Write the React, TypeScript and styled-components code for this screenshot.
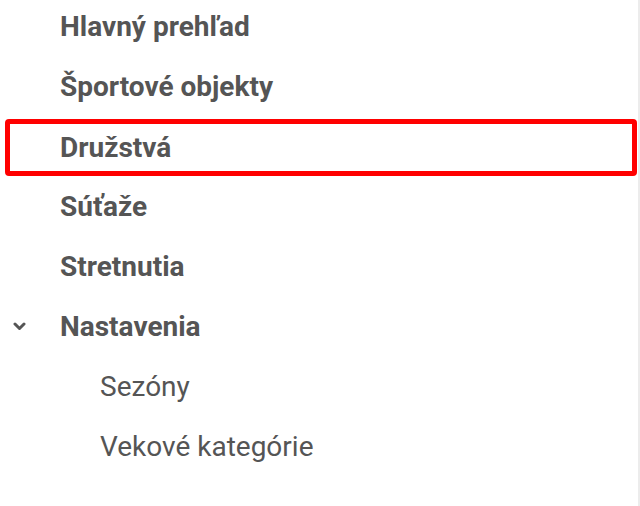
import React from "react";
import styled, { createGlobalStyle } from "styled-components";

const Global = createGlobalStyle`
  html, body { margin: 0; padding: 0; background: #fff; }
  body { font-family: Roboto, "Liberation Sans", sans-serif; }
`;

const Sidebar = styled.nav`
  width: 638px;
  height: 506px;
  border-right: 2px solid #ececec;
  overflow: hidden;
`;

const List = styled.ul`
  list-style: none;
  margin: -4px 0 0 0;
  padding: 0;
`;

const Item = styled.li<{ $active?: boolean; $level?: number }>`
  display: flex;
  align-items: center;
  position: relative;
  box-sizing: border-box;
  height: ${(p) => (p.$active ? "57px" : "60px")};
  padding-left: ${(p) => (p.$level ? 100 : 60) - (p.$active ? 10 : 0)}px;
  margin: ${(p) => (p.$active ? "3px 1px 0 5px" : "0")};
  border: ${(p) => (p.$active ? "5px solid #ff0000" : "none")};
  border-radius: ${(p) => (p.$active ? "4px" : "0")};
  font-size: 28px;
  font-weight: ${(p) => (p.$level ? 400 : 700)};
  color: #555555;
`;

const Caret = styled.svg`
  position: absolute;
  left: 13px;
  top: 50%;
  margin-top: -4px;
  width: 13px;
  height: 9px;
`;

export default function App() {
  return (
    <>
      <Global />
      <Sidebar>
        <List>
          <Item>Hlavný prehľad</Item>
          <Item>Športové objekty</Item>
          <Item $active>Družstvá</Item>
          <Item>Súťaže</Item>
          <Item>Stretnutia</Item>
          <Item>
            <Caret viewBox="0 0 13 9">
              <path d="M2 2 L6.5 6.5 L11 2" fill="none" stroke="#555" strokeWidth="3" strokeLinecap="round" strokeLinejoin="round" />
            </Caret>
            Nastavenia
          </Item>
          <Item $level={1}>Sezóny</Item>
          <Item $level={1}>Vekové kategórie</Item>
        </List>
      </Sidebar>
    </>
  );
}
